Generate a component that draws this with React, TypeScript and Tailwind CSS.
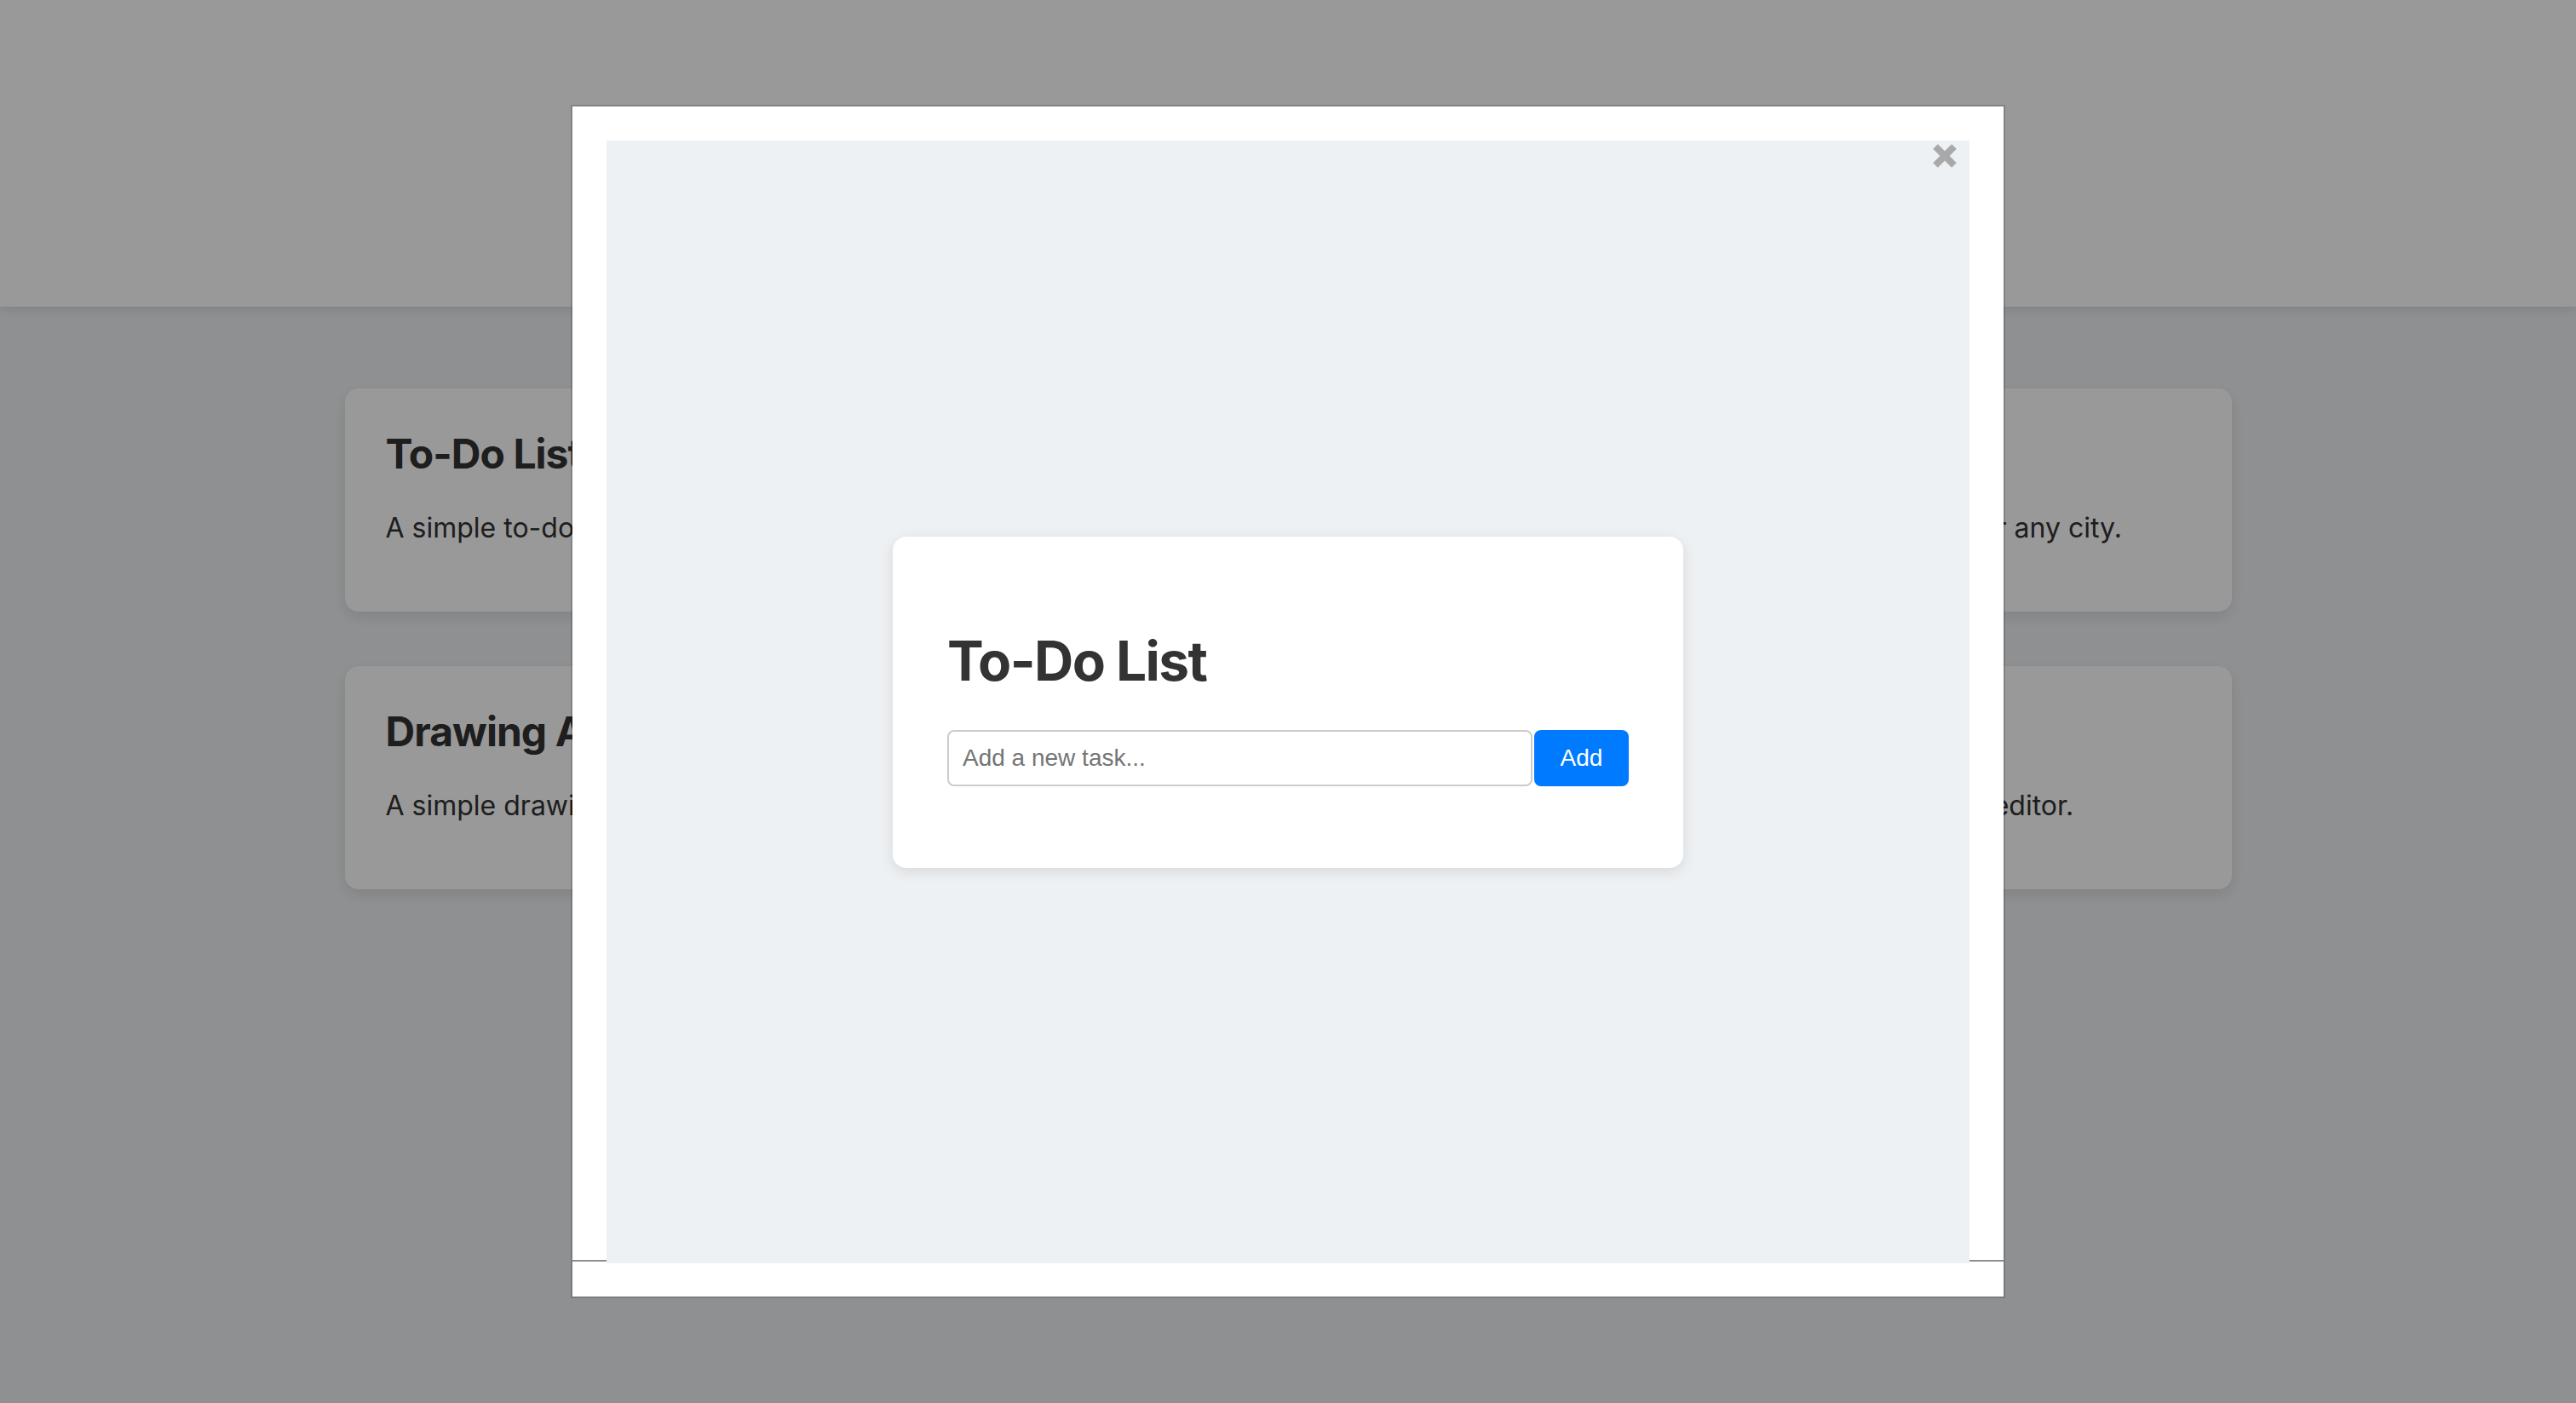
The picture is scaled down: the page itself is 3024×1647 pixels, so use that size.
const apps = [
  { title: 'To-Do List', desc: 'A simple to-do list app.' },
  { title: 'Calculator', desc: 'A basic calculator.' },
  { title: 'Weather App', desc: 'Get the latest weather for any city.' },
  { title: 'Drawing App', desc: 'A simple drawing app.' },
  { title: 'Notes App', desc: 'Write and save notes.' },
  { title: 'Text Editor', desc: 'A simple live Markdown editor.' },
];

function CloseIcon() {
  return (
    <svg width="30" height="30" viewBox="0 0 30 30" className="block">
      <path d="M4 4 L26 26 M26 4 L4 26" stroke="#a9a9a9" strokeWidth="8" strokeLinecap="butt" fill="none" />
    </svg>
  );
}

export default function App() {
  return (
    <div className="relative min-h-screen bg-[#eef1f4] font-['Inter',sans-serif]">
      <header className="h-[360px] bg-white shadow-[0_4px_14px_rgba(0,0,0,0.1)] flex items-center justify-center">
        <h1 className="text-[72px] font-bold text-[#333]">My Mini Apps</h1>
      </header>

      <main className="mx-auto w-[2215px] pt-[96px] pb-[96px]">
        <div className="grid grid-cols-3 gap-[64px]">
          {apps.map((a) => (
            <div
              key={a.title}
              className="h-[262px] rounded-[16px] bg-white p-[48px] shadow-[0_6px_18px_rgba(0,0,0,0.1)]"
            >
              <h2 className="text-[48px] leading-[58px] font-bold tracking-[-0.02em] text-[#333] whitespace-nowrap">{a.title}</h2>
              <p className="mt-[32px] text-[32px] leading-[51px] text-[#333] whitespace-nowrap">{a.desc}</p>
            </div>
          ))}
        </div>
      </main>

      {/* modal */}
      <div className="fixed inset-0 bg-black/40 flex items-center justify-center">
        <div className="relative w-[1680px] h-[1397px] bg-white pt-[40px] px-[40px] pb-[39px] shadow-[0_0_0_2px_rgba(0,0,0,0.15)]">
          <div className="absolute left-0 right-0 top-[1354px] h-[2px] bg-[#8e8e8e]" />
          <div className="relative h-full bg-[#eef1f4] flex items-center justify-center">
            <div className="w-[928px] rounded-[16px] bg-white px-[64px] pt-[64px] pb-[96px] shadow-[0_4px_16px_rgba(0,0,0,0.1)]">
              <h1 className="mt-[45px] text-[64px] leading-[74px] font-bold tracking-tight text-[#333]">To-Do List</h1>
              <div className="mt-[44px] flex h-[66px]">
                <input
                  type="text"
                  placeholder="Add a new task..."
                  className="flex-1 min-w-0 border-2 border-[#cccccc] rounded-[8px] px-[16px] text-[28px] font-['Liberation_Sans',Arial,sans-serif] text-[#333] placeholder:text-[#757575] outline-none"
                />
                <button className="ml-[2px] w-[111px] rounded-[8px] bg-[#007bff] text-white text-[28px] font-['Liberation_Sans',Arial,sans-serif]">
                  Add
                </button>
              </div>
            </div>
          </div>
          <button className="absolute top-[43px] right-[54px]">
            <CloseIcon />
          </button>
        </div>
      </div>
    </div>
  );
}
